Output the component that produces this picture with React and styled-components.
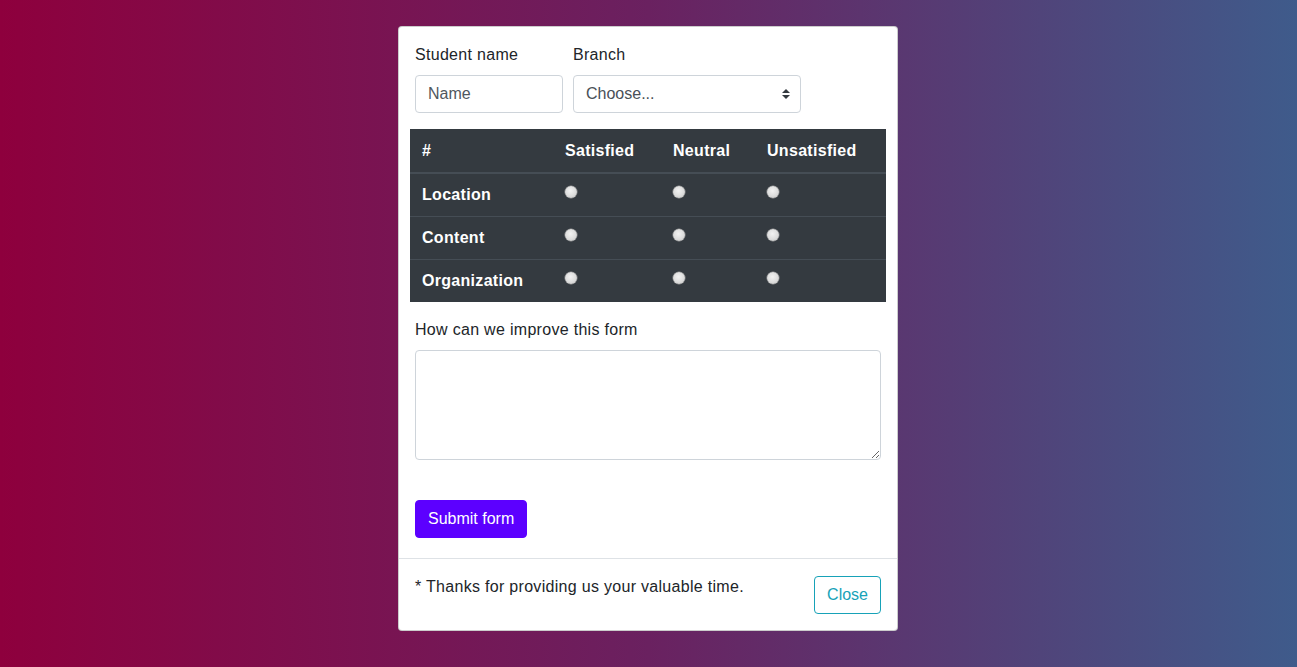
import React from "react";
import styled, { createGlobalStyle } from "styled-components";

const Global = createGlobalStyle`
  * { box-sizing: border-box; }
  html, body { margin: 0; padding: 0; }
  body {
    min-height: 667px;
    font-family: "Liberation Sans", Arial, sans-serif;
    font-size: 16px;
    line-height: 1.5;
    letter-spacing: 0.3px;
    color: #212529;
    background: linear-gradient(to right, #8e003d 0%, #6a2160 50%, #3f5b8b 100%);
  }
`;

const Page = styled.div`
  min-height: 667px;
  padding: 26px 1px 0 0;
`;

const Modal = styled.div`
  width: 500px;
  margin: 0 auto;
  background: #fff;
  border: 1px solid rgba(0, 0, 0, 0.2);
  border-radius: 4px;
`;

const Body = styled.div`
  padding: 16px 16px 20px;
`;

const Row = styled.div`
  display: flex;
  gap: 10px;
`;

const Group = styled.div`
  display: flex;
  flex-direction: column;
  margin-bottom: ${(p) => p.$mb || 16}px;
`;

const Label = styled.label`
  display: block;
  margin-bottom: 8px;
  line-height: 24px;
`;

const Input = styled.input`
  width: ${(p) => p.$w}px;
  height: 38px;
  padding: 6px 12px;
  font: inherit;
  color: #495057;
  border: 1px solid #ced4da;
  border-radius: 4px;
  background: #fff;
  &::placeholder { color: #50575e; }
`;

const SelectWrap = styled.div`
  position: relative;
  width: ${(p) => p.$w}px;
`;

const Select = styled.select`
  width: 100%;
  height: 38px;
  padding: 6px 28px 6px 12px;
  font: inherit;
  color: #495057;
  border: 1px solid #ced4da;
  border-radius: 4px;
  background: #fff;
  appearance: none;
  -webkit-appearance: none;
`;

const Caret = styled.svg`
  position: absolute;
  right: 11px;
  top: 14px;
  pointer-events: none;
`;

const Table = styled.table`
  width: 476px;
  margin: 0 -5px 16px;
  border-collapse: collapse;
  background: #343a40;
  color: #fff;
  font-weight: bold;
`;

const Cell = styled.th`
  width: ${(p) => p.$w}px;
  padding: 12px;
  line-height: ${(p) => (p.$head ? 19 : 18)}px;
  text-align: left;
  vertical-align: top;
  border-top: ${(p) => (p.$head ? "none" : "1px solid #454d55")};
  border-bottom: ${(p) => (p.$head ? "2px solid #454d55" : "none")};
`;

const Radio = styled.input`
  appearance: none;
  -webkit-appearance: none;
  display: block;
  width: 12px;
  height: 12px;
  margin: 0;
  border-radius: 50%;
  background: radial-gradient(circle at 45% 40%, #f2f2f2 0%, #dcdcdc 55%, #bdbdbd 100%);
  box-shadow: 0 0 0 0.5px #9a9a9a;
`;

const TextArea = styled.textarea`
  display: block;
  width: 466px;
  height: 110px;
  padding: 6px 12px;
  font: inherit;
  border: 1px solid #ced4da;
  border-radius: 4px;
  resize: vertical;
`;

const SubmitButton = styled.button`
  height: 38px;
  padding: 6px 12px;
  font: inherit;
  color: #fff;
  background: #5c00ff;
  border: 1px solid #5c00ff;
  border-radius: 4px;
  cursor: pointer;
`;

const Footer = styled.div`
  display: flex;
  justify-content: space-between;
  align-items: flex-start;
  padding: 16px;
  border-top: 1px solid #dee2e6;
`;

const Note = styled.p`
  margin: 0;
  line-height: 24px;
`;

const OutlineButton = styled.button`
  height: 38px;
  padding: 6px 12px;
  margin-top: 1px;
  font: inherit;
  color: #17a2b8;
  background: transparent;
  border: 1px solid #17a2b8;
  border-radius: 4px;
  cursor: pointer;
`;

const widths = [143, 108, 94, 131];
const rows = ["Location", "Content", "Organization"];

export default function App() {
  return (
    <>
      <Global />
      <Page>
        <Modal>
          <Body>
            <Row>
              <Group>
                <Label>Student name</Label>
                <Input $w={148} placeholder="Name" />
              </Group>
              <Group>
                <Label>Branch</Label>
                <SelectWrap $w={228}>
                  <Select defaultValue="">
                    <option value="">Choose...</option>
                  </Select>
                  <Caret width="8" height="10" viewBox="0 0 8 10">
                    <path d="M4 0 L8 4 L0 4 Z M4 10 L8 6 L0 6 Z" fill="#343a40" />
                  </Caret>
                </SelectWrap>
              </Group>
            </Row>
            <Table>
              <thead>
                <tr>
                  {["#", "Satisfied", "Neutral", "Unsatisfied"].map((h, i) => (
                    <Cell $head $w={widths[i]} key={h}>{h}</Cell>
                  ))}
                </tr>
              </thead>
              <tbody>
                {rows.map((r) => (
                  <tr key={r}>
                    <Cell $w={widths[0]}>{r}</Cell>
                    {[1, 2, 3].map((c) => (
                      <Cell $w={widths[c]} key={c}>
                        <Radio type="radio" name={r} />
                      </Cell>
                    ))}
                  </tr>
                ))}
              </tbody>
            </Table>
            <Group $mb={40}>
              <Label>How can we improve this form</Label>
              <TextArea />
            </Group>
            <SubmitButton>Submit form</SubmitButton>
          </Body>
          <Footer>
            <Note>* Thanks for providing us your valuable time.</Note>
            <OutlineButton>Close</OutlineButton>
          </Footer>
        </Modal>
      </Page>
    </>
  );
}
